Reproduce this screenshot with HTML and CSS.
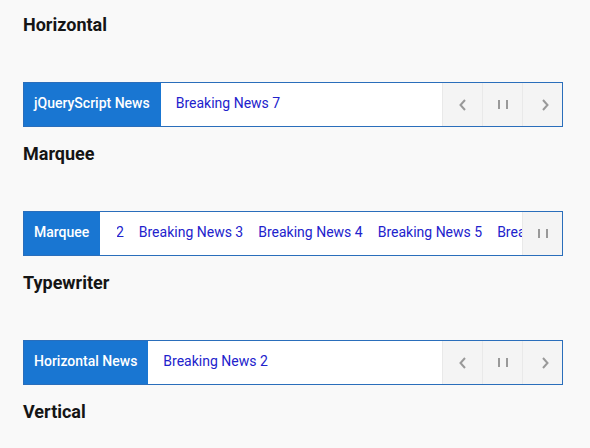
FILE: index.html
```html
<!DOCTYPE html>
<html lang="en">
<head>
  <meta charset="UTF-8">
  <title>Breaking News Ticker Demo</title>
  <meta name="viewport" content="width=device-width, initial-scale=1.0">
  <link rel="stylesheet" href="styles.css">
</head>
<body>
  <div class="container">
    <h3>Horizontal</h3>
    <div class="ticker">
      <div class="ticker-label">jQueryScript News</div>
      <div class="ticker-news">
        <ul>
          <li><a href="#">Breaking News 7</a></li>
        </ul>
      </div>
      <div class="ticker-controls">
        <button class="prev"><svg width="10" height="12" viewBox="0 0 10 12"><path d="M7 1 L2.5 6 L7 11" fill="none" stroke="#999" stroke-width="2"/></svg></button>
        <button class="pause"><span></span><span></span></button>
        <button class="next"><svg width="10" height="12" viewBox="0 0 10 12"><path d="M3 1 L7.5 6 L3 11" fill="none" stroke="#999" stroke-width="2"/></svg></button>
      </div>
    </div>

    <h3>Marquee</h3>
    <div class="ticker">
      <div class="ticker-label">Marquee</div>
      <div class="ticker-news scrolling">
        <ul class="marquee">
          <li><a href="#">Breaking News 2</a></li>
          <li><a href="#">Breaking News 3</a></li>
          <li><a href="#">Breaking News 4</a></li>
          <li><a href="#">Breaking News 5</a></li>
          <li><a href="#">Breaking News 6</a></li>
        </ul>
      </div>
      <div class="ticker-controls">
        <button class="pause"><span></span><span></span></button>
      </div>
    </div>

    <h3>Typewriter</h3>
    <div class="ticker">
      <div class="ticker-label">Horizontal News</div>
      <div class="ticker-news">
        <ul>
          <li><a href="#">Breaking News 2</a></li>
        </ul>
      </div>
      <div class="ticker-controls">
        <button class="prev"><svg width="10" height="12" viewBox="0 0 10 12"><path d="M7 1 L2.5 6 L7 11" fill="none" stroke="#999" stroke-width="2"/></svg></button>
        <button class="pause"><span></span><span></span></button>
        <button class="next"><svg width="10" height="12" viewBox="0 0 10 12"><path d="M3 1 L7.5 6 L3 11" fill="none" stroke="#999" stroke-width="2"/></svg></button>
      </div>
    </div>

    <h3>Vertical</h3>
  </div>
</body>
</html>
```

FILE: styles.css
```css
:root {
  --bg: #f9f9f9;
  --theme: #1976d2;
  --border: #2a6ebb;
  --link: #2222cc;
  --ctrl: #f4f4f4;
  --ctrl-line: #e9e9e9;
}

* {
  box-sizing: border-box;
  font-family: Roboto, 'Liberation Sans', sans-serif;
}

body {
  margin: 0;
  background-color: var(--bg);
  color: #151515;
}

.container {
  padding: 14px 27px 0 23px;
}

h3 {
  margin: 0 0 47px;
  font-size: 18px;
  font-weight: bold;
  line-height: 21px;
}

.ticker {
  display: flex;
  height: 45px;
  border: 1px solid var(--border);
  background: #fff;
  margin-bottom: 16px;
  overflow: hidden;
}

.ticker-label {
  background: var(--theme);
  color: #fff;
  font-size: 14px;
  font-weight: 500;
  padding: 0 11px 4px;
  display: flex;
  align-items: center;
  white-space: nowrap;
  margin: -1px 0 -1px -1px;
}

.ticker-news {
  flex: 1;
  min-width: 0;
  overflow: hidden;
  display: flex;
  align-items: center;
  padding-bottom: 4px;
}

.ticker-news.scrolling {
  margin-left: 17px;
}

.ticker-news ul {
  list-style: none;
  margin: 0;
  padding: 0 0 0 15px;
  display: flex;
  flex-shrink: 0;
  white-space: nowrap;
}

.ticker-news ul.marquee {
  padding: 0;
  transform: translateX(-98px);
}

.ticker-news li {
  margin-right: 15px;
}

.ticker-news a {
  color: var(--link);
  text-decoration: none;
  font-size: 14px;
}

.ticker-controls {
  display: flex;
}

.ticker-controls button {
  width: 40px;
  height: 100%;
  border: none;
  border-left: 1px solid var(--ctrl-line);
  background: var(--ctrl);
  display: flex;
  align-items: center;
  justify-content: center;
  padding: 0;
  cursor: pointer;
}

.ticker-controls .pause {
  gap: 6px;
}

.ticker-controls .pause span {
  width: 2px;
  height: 9px;
  background: #999;
}

.ticker-controls .next svg {
  margin-left: 4px;
}
```
